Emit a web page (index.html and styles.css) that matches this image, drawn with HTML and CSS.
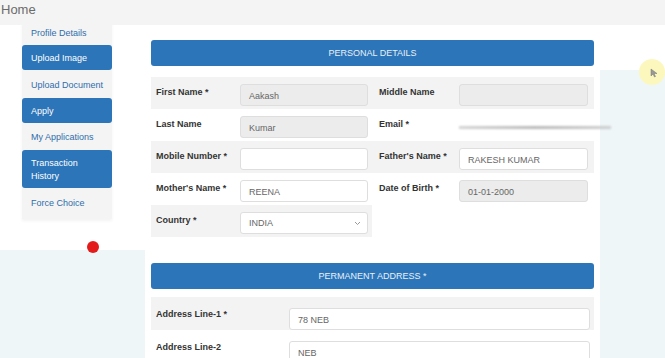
FILE: index.html
```html
<!DOCTYPE html>
<html lang="en">
<head>
    <meta charset="UTF-8">
    <title>Home</title>
    <link rel="stylesheet" href="styles.css">
</head>
<body>
    <div class="topbar">Home</div>

    <div class="layout">
        <div class="side-col">
            <ul class="sidebar">
                <li class="first">Profile Details</li>
                <li class="active">Upload Image</li>
                <li class="plain">Upload Document</li>
                <li class="active">Apply</li>
                <li>My Applications</li>
                <li class="active tall">Transaction<br>History</li>
                <li class="plain">Force Choice</li>
            </ul>
        </div>

        <div class="main">
            <div class="panel-head">PERSONAL DETAILS</div>
            <div class="form">
                <div class="row shade">
                    <label>First Name *</label>
                    <div class="cell"><div class="field disabled">Aakash</div></div>
                    <label class="second">Middle Name</label>
                    <div class="cell right"><div class="field disabled"></div></div>
                </div>
                <div class="row">
                    <label>Last Name</label>
                    <div class="cell"><div class="field disabled">Kumar</div></div>
                    <label class="second">Email *</label>
                    <div class="cell right"><div class="blurred"></div></div>
                </div>
                <div class="row shade">
                    <label>Mobile Number *</label>
                    <div class="cell"><div class="field"></div></div>
                    <label class="second">Father's Name *</label>
                    <div class="cell right"><div class="field">RAKESH KUMAR</div></div>
                </div>
                <div class="row">
                    <label>Mother's Name *</label>
                    <div class="cell"><div class="field">REENA</div></div>
                    <label class="second">Date of Birth *</label>
                    <div class="cell right"><div class="field disabled">01-01-2000</div></div>
                </div>
                <div class="row half shade">
                    <label>Country *</label>
                    <div class="cell">
                        <div class="field select">
                            INDIA
                            <svg width="7" height="5" viewBox="0 0 7 5"><path d="M1 1l2.5 2.5L6 1" fill="none" stroke="#999" stroke-width="1"/></svg>
                        </div>
                    </div>
                </div>
            </div>

            <div class="panel-head second-head">PERMANENT ADDRESS *</div>
            <div class="form address">
                <div class="addr-row shade">
                    <label>Address Line-1 *</label>
                    <div class="field">78 NEB</div>
                </div>
                <div class="addr-row">
                    <label>Address Line-2</label>
                    <div class="field">NEB</div>
                </div>
            </div>
        </div>
    </div>

    <div class="click-dot"></div>
    <div class="cursor-ring">
        <svg width="8" height="10" viewBox="0 0 8 10"><path d="M1 1v7l2-2 1.5 3 1-0.5L4 5.5h3z" fill="#999" stroke="#777" stroke-width="0.5"/></svg>
    </div>
</body>
</html>
```

FILE: styles.css
```css
body {
    margin: 0;
    font-family: 'Liberation Sans', Arial, sans-serif;
    background: #eef6f8;
    height: 358px;
    overflow: hidden;
    position: relative;
}

.topbar {
    height: 25px;
    line-height: 19px;
    background: #f4f4f4;
    color: #6b6b6b;
    font-size: 13px;
    padding-left: 1px;
    position: relative;
    z-index: 2;
}

.layout {
    display: flex;
    background: linear-gradient(#fff 45px, transparent 45px);
}

.side-col {
    width: 145px;
    height: 225px;
    background: #fff;
    padding-left: 22px;
    box-sizing: border-box;
}

.sidebar {
    list-style: none;
    margin: -3px 0 0;
    padding: 0 0 3px;
    width: 90px;
    background: #f4f4f4;
    box-shadow: 0 2px 3px rgba(0, 0, 0, 0.05);
}

.sidebar li {
    height: 25px;
    line-height: 26px;
    padding-left: 9px;
    font-size: 9px;
    color: #2f6eab;
    margin-bottom: 1px;
}

.sidebar li.plain {
    margin-top: 2px;
}

.sidebar li.first {
    height: 20px;
    line-height: 22px;
    margin-bottom: 3px;
}

.sidebar li.active {
    background: #2c75b8;
    color: #fff;
    border-radius: 3px;
}

.sidebar li.tall {
    height: 38px;
    line-height: 13px;
    padding-top: 7px;
    box-sizing: border-box;
}

.main {
    width: 455px;
    background: #fff;
    padding: 15px 0 0 6px;
    box-sizing: border-box;
    min-height: 333px;
}

.panel-head {
    width: 443px;
    height: 26px;
    line-height: 26px;
    background: #2c75b8;
    border-radius: 3px;
    color: #e8f0f8;
    font-size: 9px;
    text-align: center;
}

.second-head {
    margin-top: 26px;
}

.form {
    width: 443px;
    margin-top: 11px;
}

.row {
    display: grid;
    grid-template-columns: 84px 137px 83px 139px;
    height: 32px;
    box-sizing: border-box;
    padding-top: 7px;
}

.row.half {
    grid-template-columns: 84px 137px;
    width: 221px;
}

.shade {
    background: #f3f3f3;
}

label {
    font-size: 9px;
    font-weight: bold;
    color: #333;
    padding: 3px 0 0 5px;
}

label.second {
    padding-left: 7px;
}

.cell {
    padding-left: 5px;
}

.cell.right {
    padding-left: 4px;
}

.field {
    width: 128px;
    height: 22px;
    line-height: 22px;
    box-sizing: border-box;
    border: 1px solid #dedede;
    border-radius: 3px;
    background: #fff;
    padding-left: 8px;
    font-size: 9px;
    color: #666;
}

.cell.right .field {
    width: 129px;
}

.field.disabled {
    background: #ececec;
}

.field.select {
    display: flex;
    justify-content: space-between;
    align-items: center;
    padding-right: 6px;
    line-height: normal;
}

.blurred {
    margin-top: 10px;
    width: 152px;
    height: 3px;
    background: linear-gradient(90deg, #d4d4d4, #b9b9b9, #cfcfcf);
    filter: blur(1px);
}

.address {
    margin-top: 8px;
}

.addr-row {
    display: flex;
    height: 33px;
    padding-top: 11px;
    box-sizing: border-box;
}

.addr-row label {
    width: 133px;
    padding-top: 1px;
}

.addr-row .field {
    width: 301px;
}

.click-dot {
    position: absolute;
    left: 87px;
    top: 241px;
    width: 12px;
    height: 12px;
    border-radius: 50%;
    background: #e41b1b;
}

.cursor-ring {
    position: absolute;
    left: 639px;
    top: 59px;
    width: 26px;
    height: 26px;
    border-radius: 50%;
    background: #fcf8bd;
    display: flex;
    align-items: center;
    justify-content: center;
}

.cursor-ring svg {
    margin: 2px 0 0 4px;
}
```
